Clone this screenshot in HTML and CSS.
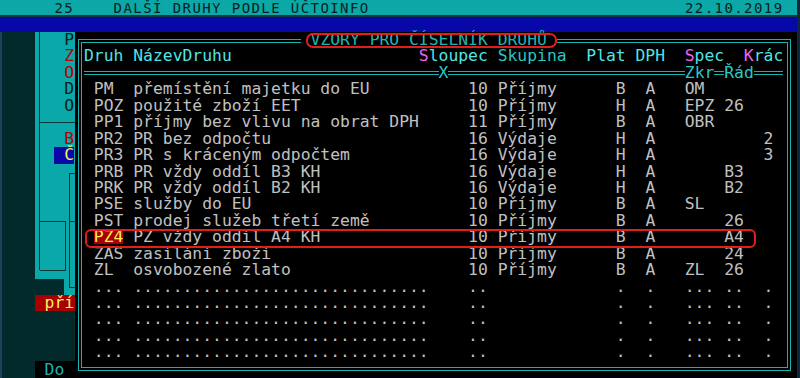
FILE: index.html
```html
<!DOCTYPE html>
<html lang="cs">
<head>
    <meta charset="UTF-8">
    <title>Další druhy podle účtoinfo</title>
    <link rel="stylesheet" href="styles.css">
</head>
<body>
<div class="screen">
    <div class="topbar"><span>25    DALŠÍ DRUHY PODLE ÚČTOINFO</span><span>22.10.2019</span></div>
    <div class="menubar"></div>

    <div class="desk">
        <div class="side">
            <div class="pane">
                <div class="pr">P</div>
                <div class="pr red">Z</div>
                <div class="pr red">O</div>
                <div class="pr">D</div>
                <div class="pr">O</div>
                <div class="pr"></div>
                <div class="pr red">B</div>
                <div class="pr"><span class="sel">Č</span></div>
                <div class="pr"></div>
                <div class="pr"></div>
                <div class="pr"></div>
                <div class="pr"></div>
                <div class="pr"></div>
                <div class="pr"></div>
                <div class="pr"></div>
            </div>
            <div class="pane-tail"></div>
            <div class="hot">pří</div>
            <div class="side-gap"></div>
            <div class="dosbox">Do</div>
        </div>

        <div class="popup">
            <div class="frame">
                <div class="head">
                    <span>Druh NázevDruhu</span>
                    <span><b class="mg">S</b>loupec</span>
                    <span class="sk">Skupina</span>
                    <span>Plat</span>
                    <span>DPH</span>
                    <span><b class="mg">S</b>pec</span>
                    <span><b class="mg">K</b>rác</span>
                </div>
                <div class="sep">
                    <i class="ln w36"></i><span>X</span><i class="ln w24"></i><span>Zkr</span><i class="ln w1"></i><span>Řád</span><i class="ln w3"></i>
                </div>

                <div class="row"><span>PM</span><span>přemístění majetku do EU</span><span>10</span><span>Příjmy</span><span>B</span><span>A</span><span>OM</span><span></span><span></span></div>
                <div class="row"><span>POZ</span><span>použité zboží EET</span><span>10</span><span>Příjmy</span><span>H</span><span>A</span><span>EPZ</span><span>26</span><span></span></div>
                <div class="row"><span>PP1</span><span>příjmy bez vlivu na obrat DPH</span><span>11</span><span>Příjmy</span><span>B</span><span>A</span><span>OBR</span><span></span><span></span></div>
                <div class="row"><span>PR2</span><span>PR bez odpočtu</span><span>16</span><span>Výdaje</span><span>H</span><span>A</span><span></span><span></span><span>2</span></div>
                <div class="row"><span>PR3</span><span>PR s kráceným odpočtem</span><span>16</span><span>Výdaje</span><span>H</span><span>A</span><span></span><span></span><span>3</span></div>
                <div class="row"><span>PRB</span><span>PR vždy oddíl B3 KH</span><span>16</span><span>Výdaje</span><span>H</span><span>A</span><span></span><span>B3</span><span></span></div>
                <div class="row"><span>PRK</span><span>PR vždy oddíl B2 KH</span><span>16</span><span>Výdaje</span><span>H</span><span>A</span><span></span><span>B2</span><span></span></div>
                <div class="row"><span>PSE</span><span>služby do EU</span><span>10</span><span>Příjmy</span><span>B</span><span>A</span><span>SL</span><span></span><span></span></div>
                <div class="row"><span>PST</span><span>prodej služeb třetí země</span><span>10</span><span>Příjmy</span><span>B</span><span>A</span><span></span><span>26</span><span></span></div>
                <div class="row"><span><span class="cur">PZ4</span></span><span>PZ vždy oddíl A4 KH</span><span>10</span><span>Příjmy</span><span>B</span><span>A</span><span></span><span>A4</span><span></span></div>
                <div class="row"><span>ZAS</span><span>zasílání zboží</span><span>10</span><span>Příjmy</span><span>B</span><span>A</span><span></span><span>24</span><span></span></div>
                <div class="row"><span>ZL</span><span>osvobozené zlato</span><span>10</span><span>Příjmy</span><span>B</span><span>A</span><span>ZL</span><span>26</span><span></span></div>

                <div class="row"><span>...</span><span>..............................</span><span>..</span><span></span><span>.</span><span>.</span><span>...</span><span>..</span><span>.</span></div>
                <div class="row"><span>...</span><span>..............................</span><span>..</span><span></span><span>.</span><span>.</span><span>...</span><span>..</span><span>.</span></div>
                <div class="row"><span>...</span><span>..............................</span><span>..</span><span></span><span>.</span><span>.</span><span>...</span><span>..</span><span>.</span></div>
                <div class="row"><span>...</span><span>..............................</span><span>..</span><span></span><span>.</span><span>.</span><span>...</span><span>..</span><span>.</span></div>
                <div class="row"><span>...</span><span>..............................</span><span>..</span><span></span><span>.</span><span>.</span><span>...</span><span>..</span><span>.</span></div>
            </div>

            <div class="title">VZORY PRO ČÍSELNÍK DRUHŮ</div>
            <div class="mark mark-title"></div>
            <div class="mark mark-row"></div>
        </div>
    </div>
</div>
</body>
</html>
```

FILE: styles.css
```css
body {
    margin: 0;
    background: #10263a;
    font-family: "DejaVu Sans Mono", monospace;
    font-size: 16.36px;
}
.screen {
    width: 797px;
    height: 378px;
    overflow: hidden;
    background: #000;
}
.topbar {
    display: flex;
    justify-content: space-between;
    height: 15px;
    line-height: 16px;
    padding: 0 13.5px 0 54.5px;
    background: #0ca8a8;
    color: #082020;
    border-bottom: 2px solid #17393c;
    font-size: 14px;
    letter-spacing: 1.42px;
    white-space: pre;
    overflow: hidden;
}
.menubar {
    height: 15px;
    background: #0808a8;
}
.desk {
    display: flex;
    height: 346px;
}

/* windows behind the popup */
.side {
    width: 73px;
    border-left: 2px solid #1a4258;
    background: #032a2a;
    display: flex;
    flex-direction: column;
}
.pane {
    margin-left: 33px;
    width: 40px;
    background:
        linear-gradient(#073434, #073434) 4px 0 / 1px 238px no-repeat,
        linear-gradient(#073434, #073434) 5px 90px / 35px 1px no-repeat,
        linear-gradient(#073434, #073434) 34px 141px / 1px 106px no-repeat,
        linear-gradient(#073434, #073434) 34px 141px / 6px 1px no-repeat,
        linear-gradient(#073434, #073434) 5px 189px / 25px 1px no-repeat,
        linear-gradient(#073434, #073434) 35px 189px / 5px 1px no-repeat,
        linear-gradient(#073434, #073434) 30px 189px / 1px 49px no-repeat,
        linear-gradient(#073434, #073434) 5px 238px / 26px 1px no-repeat,
        #0aa8a8;
}
.pr {
    height: 16.45px;
    line-height: 16.45px;
    text-align: right;
    padding-right: 1px;
    color: #062020;
}
.pr.red { color: #b80000; }
.sel {
    display: inline-block;
    width: 2ch;
    background: #0808a8;
    color: #f4f060;
}
.pane-tail {
    margin-left: 62px;
    width: 11px;
    height: 16.45px;
    background:
        linear-gradient(#073434, #073434) 5px 0 / 1px 8px no-repeat,
        linear-gradient(#073434, #073434) 5px 8px / 6px 1px no-repeat,
        #0aa8a8;
}
.hot {
    margin-left: 33px;
    height: 16.45px;
    line-height: 16.45px;
    padding-left: 9.6px;
    background: #a80000;
    color: #f4f060;
}
.side-gap { flex: 1; }
.dosbox {
    margin-left: 33px;
    height: 17px;
    line-height: 17px;
    padding-left: 9.6px;
    background: #000;
    color: #18b4b4;
}

/* popup */
.popup {
    flex: 1;
    position: relative;
    padding: 7px 6px 7px 3px;
    background: #000;
}
.frame {
    height: 100%;
    box-sizing: border-box;
    border: 4px double #14b2b2;
    padding: 5.45px 0 0 2px;
}
.title {
    position: absolute;
    left: 225.7px;
    top: 0;
    line-height: 16.45px;
    padding: 0 1ch;
    background: #000;
    color: #20b4b4;
}
.head, .row {
    display: grid;
    height: 16.45px;
    line-height: 16.45px;
    white-space: pre;
}
.head {
    grid-template-columns: 34ch 8ch 9ch 5ch 5ch 6ch 4ch;
    color: #52e4e4;
}
.head b { font-weight: normal; }
.mg { color: #f060f0; }
.sk { color: #2cc4c4; }
.sep {
    display: flex;
    height: 16.45px;
    line-height: 16.45px;
    color: #2cc8c8;
}
.ln {
    height: 0;
    margin-top: 6px;
    border-top: 4px double #14b2b2;
}
.w36 { width: 36ch; }
.w24 { width: 24ch; }
.w1 { width: 1ch; }
.w3 { width: 3ch; }
.row {
    grid-template-columns: 4ch 34ch 3ch 12ch 3ch 4ch 4ch 4ch 2ch;
    padding-left: 1ch;
    color: #c0c0c0;
}
.cur {
    display: inline-block;
    line-height: 14px;
    background: #a80000;
    color: #f8f050;
}

/* red hand-drawn marks */
.mark {
    position: absolute;
    border: 2px solid #e31c1c;
    border-radius: 7px;
}
.mark-title {
    left: 231px;
    top: 1px;
    width: 247px;
    height: 11px;
}
.mark-row {
    left: 10px;
    top: 197px;
    width: 667px;
    height: 15px;
    border-radius: 6px;
}
```
